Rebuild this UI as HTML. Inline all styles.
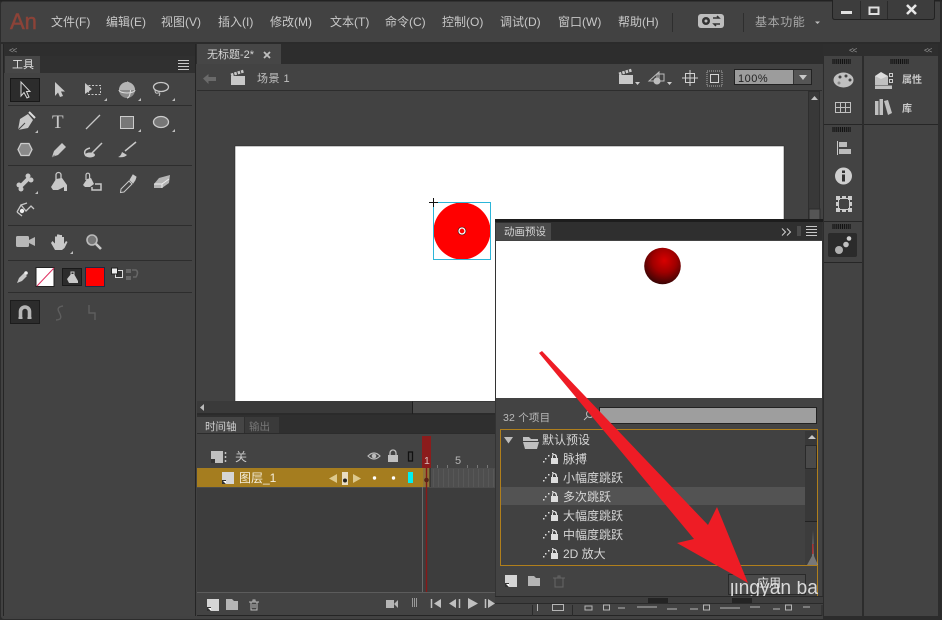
<!DOCTYPE html>
<html><head><meta charset="utf-8">
<style>
html,body{margin:0;padding:0;background:#424242;width:942px;height:620px;overflow:hidden}
svg{display:block}
text{font-family:"Liberation Sans","Noto Sans CJK SC",sans-serif;font-size:12px;fill:#c8c8c8}
</style></head><body>
<svg width="942" height="620" viewBox="0 0 942 620" xmlns="http://www.w3.org/2000/svg">
<defs>
<radialGradient id="ball" cx="55%" cy="35%" r="65%"><stop offset="0" stop-color="#d80000"/><stop offset=".5" stop-color="#a00000"/><stop offset="1" stop-color="#3a0505"/></radialGradient>
<clipPath id="wm"><rect x="730" y="581" width="88" height="15"/></clipPath>
<g id="tri"><path d="M0 3L3 0V3Z" fill="#bdbdbd"/></g>
<g id="preset"><g fill="#ddd"><rect x="0" y="9" width="1.500" height="1.500"/><rect x="2" y="6" width="1.500" height="1.500"/><rect x="5" y="3" width="1.500" height="1.500"/><rect x="9" y="1" width="1.500" height="1.500"/><rect x="12" y="3" width="1.500" height="1.500"/></g><rect x="8" y="6" width="7" height="6" fill="#ddd"/><path d="M9.500 6V4.500a2 2 0 0 1 4 0V6" fill="none" stroke="#ddd"/></g>
<g id="grip"><path d="M0 0v5M2 0v5M4 0v5M6 0v5M8 0v5M10 0v5M12 0v5M14 0v5M16 0v5M18 0v5" stroke="#111" stroke-width="1.100"/></g>
<g id="menu"><path d="M0 .5H11M0 3.500H11M0 6.500H11M0 9.500H11" stroke="#c8c8c8"/></g>
<g id="layer"><rect width="12" height="12" fill="#d5d5d5"/><path d="M0 8H4V12H0Z" fill="#333"/><path d="M1 9h3v3z" fill="#fff"/></g>
</defs>

<!-- window -->
<rect width="942" height="620" fill="#2c2c2c"/>
<rect x="1" y="1" width="940" height="618" rx="3" fill="#424242"/>
<rect x="0" y="0" width="942" height="1.500" fill="#222"/>
<rect x="0" y="42" width="942" height="2" fill="#2b2b2b"/>

<!-- title/menu -->
<text x="10" y="29" style="font-size:22px;fill:#8c4338;stroke:#8c4338;stroke-width:.5">An</text>
<g style="font-size:12px">
<text x="51" y="26">文件(F)</text><text x="106" y="26">编辑(E)</text><text x="161" y="26">视图(V)</text><text x="218" y="26">插入(I)</text><text x="270" y="26">修改(M)</text><text x="330" y="26">文本(T)</text><text x="385" y="26">命令(C)</text><text x="442" y="26">控制(O)</text><text x="500" y="26">调试(D)</text><text x="558" y="26">窗口(W)</text><text x="618" y="26">帮助(H)</text>
</g>
<path d="M672.500 13V32M743.500 13V32" stroke="#2e2e2e"/>
<rect x="698" y="14" width="26" height="14" rx="3" fill="#bdbdbd"/>
<circle cx="706" cy="21" r="4" fill="#333"/><circle cx="706" cy="21" r="1.500" fill="#bdbdbd"/>
<path d="M713 18h6l-2-2M720 24h-6l2 2" stroke="#333" stroke-width="1.500" fill="none"/>
<text x="755" y="26" style="font-size:12px;fill:#a8a8a8;letter-spacing:.6px">基本功能</text>
<path d="M815 21.500h5l-2.500 2.500z" fill="#bdbdbd"/>
<!-- window buttons -->
<path d="M832.500 0V17q0 2.500 2.500 2.500H932q2.500 0 2.500-2.500V0" fill="#3d3d3d" stroke="#222"/>
<path d="M860.500 1V19M887.500 1V19" stroke="#2a2a2a"/>
<rect x="841" y="11" width="11" height="3" fill="#e0e0e0"/>
<rect x="869.500" y="7.500" width="9" height="6.500" fill="none" stroke="#e0e0e0" stroke-width="2"/>
<path d="M907 5L916 14M916 5L907 14" stroke="#e8e8e8" stroke-width="2.600"/>

<!-- tools panel -->
<rect x="4" y="44" width="191" height="572" fill="#434343"/>
<rect x="4" y="44" width="191" height="12" fill="#2e2e2e"/>
<rect x="4" y="56" width="191" height="17" fill="#303030"/>
<rect x="5" y="56" width="35" height="17" fill="#464646"/>
<text x="12" y="68" style="font-size:11px;fill:#e0e0e0">工具</text>
<text x="9" y="53" style="font-size:8px;fill:#999;letter-spacing:-1px">&lt;&lt;</text>
<use href="#menu" x="178" y="60"/>
<path d="M195.500 44V616" stroke="#252525"/>
<path d="M3.500 44V616" stroke="#252525"/>
<g stroke="#2d2d2d"><path d="M8 105.500H192M8 165.500H192M8 225.500H192M8 260.500H192M8 292.500H192"/></g>

<!-- row 1 -->
<rect x="10.500" y="78.500" width="29" height="23" fill="#2c2c2c" stroke="#181818"/>
<path d="M21 82V96L24 92.500L27 98L29 97L26.500 91.500H30Z" fill="none" stroke="#d8d8d8"/>
<path d="M55 82V96L58 92.500L60 97L63 96L61 91.500H65Z" fill="#c8c8c8"/>
<path d="M85 83V94L92 89Z" fill="#c8c8c8"/><rect x="88.500" y="85.500" width="12" height="9" fill="none" stroke="#c8c8c8" stroke-dasharray="2 1.500"/>
<circle cx="127" cy="90" r="8" fill="#8a8a8a"/><path d="M119 90a8 3 0 0 0 16 0M127 82a3.500 8 0 0 1 0 16" stroke="#ddd" fill="none"/><path d="M119 90a8 8 0 0 1 16 0z" fill="#b5b5b5"/>
<ellipse cx="161" cy="87" rx="7.500" ry="4.500" fill="none" stroke="#c8c8c8" stroke-width="1.300"/><path d="M155 90q0 4 3 3q3-1 1 3" fill="none" stroke="#c8c8c8"/>
<use href="#tri" x="104" y="98"/><use href="#tri" x="138" y="98"/><use href="#tri" x="172" y="98"/>

<!-- row 2 -->
<path d="M18 130L20 119L28 114L33 120L28 128Z" fill="#c8c8c8"/><path d="M18 130L25 123" stroke="#444"/><path d="M29 112L35 118" stroke="#ddd" stroke-width="2"/>
<use href="#tri" x="35" y="130"/>
<text x="52" y="128" style="font-family:'Liberation Serif',serif;font-size:19px;fill:#c8c8c8">T</text>
<path d="M86 129L100 115" stroke="#c8c8c8" stroke-width="1.300"/>
<rect x="120.500" y="116.500" width="13" height="12" fill="#777" stroke="#ccc"/>
<use href="#tri" x="138" y="129"/>
<ellipse cx="161" cy="122" rx="7.500" ry="5.500" fill="#777" stroke="#ccc" stroke-width="1.300"/>
<use href="#tri" x="172" y="129"/>
<path d="M18 149.500L21 143.500H29L32 149.500L29 155.500H21Z" fill="#8a8a8a" stroke="#ccc" stroke-width="1.300"/>
<path d="M52 157L54 151L62 143L66 147L58 155Z" fill="#c8c8c8"/><path d="M52 157L55 155" stroke="#888"/>
<path d="M86 156q-4-6 4-8M92 153L102 143" stroke="#c8c8c8" stroke-width="1.500" fill="none"/><ellipse cx="90" cy="155" rx="5" ry="2.500" fill="#c8c8c8"/>
<path d="M125 151L136 142" stroke="#c8c8c8" stroke-width="1.500"/><path d="M118 157q3-1 4-5l5 3q-3 3-9 2z" fill="#c8c8c8"/>

<!-- row 3 -->
<path d="M20 187L29 178" stroke="#c8c8c8" stroke-width="4"/><circle cx="19" cy="185" r="2.500" fill="#c8c8c8"/><circle cx="21" cy="189" r="2.500" fill="#c8c8c8"/><circle cx="28" cy="176" r="2.500" fill="#c8c8c8"/><circle cx="31" cy="180" r="2.500" fill="#c8c8c8"/>
<use href="#tri" x="35" y="191"/>
<path d="M51 187L56 179L62 178L67 185V191H64V187L58 190H53Z" fill="#c8c8c8"/><path d="M56 180V175a2.500 2.500 0 0 1 5 0V179" fill="none" stroke="#c8c8c8" stroke-width="1.300"/>
<path d="M83 185L87 179L91 178L94 184L90 187H85Z" fill="#c8c8c8"/><path d="M86 180V175a1.800 1.800 0 0 1 3.600 0V179" fill="none" stroke="#c8c8c8" stroke-width="1.200"/><path d="M95 184H101V190H92V187" fill="none" stroke="#c8c8c8" stroke-width="1.500"/>
<path d="M121 189L129 181L132 184L124 192L120.500 192.500Z" fill="none" stroke="#c8c8c8"/><path d="M130 180L133 175L136 177L135 180L133 183Z" fill="#c8c8c8" stroke="#c8c8c8"/>
<path d="M154 184L159 178L170 175L169 183L162 188H154Z" fill="#b5b5b5"/><path d="M154 184H162L169 179M162 184V188" stroke="#eee" fill="none"/>
<path d="M17 212L21 205L26 211L31 206L34 209M21 205L27 203M17 212L22 216" fill="none" stroke="#c8c8c8" stroke-width="1.300"/><circle cx="22" cy="211" r="2.200" fill="#eee"/>

<!-- row 4 -->
<rect x="16" y="236" width="13" height="11" rx="1.500" fill="#b8b8b8"/><path d="M29 240L35 237V246L29 243Z" fill="#b8b8b8"/>
<path d="M55 250L51 243L52.500 241L55 243.500V236.500H57V242V234.500H59.500V242V235H62V242V237H64V244L66 241L67.500 242L64.500 248L62 250Z" fill="#c8c8c8"/>
<use href="#tri" x="70" y="251"/>
<circle cx="92" cy="240" r="5" fill="#777" stroke="#bbb" stroke-width="1.600"/><path d="M96 244L101 249" stroke="#c8c8c8" stroke-width="2.600"/>

<!-- colors -->
<path d="M17 283L19 278L24 273L27 276L22 281Z" fill="#c8c8c8"/><circle cx="26" cy="273" r="1.800" fill="#eee"/>
<rect x="36" y="267.500" width="18" height="19" fill="#fff" stroke="#222"/><path d="M37 286L54 268" stroke="#e03060"/>
<rect x="62.500" y="268.500" width="19" height="17" fill="#2c2c2c" stroke="#1a1a1a"/>
<path d="M67 279L71 274H74L78 281V283H69Z" fill="#c8c8c8"/><path d="M71 275V272h3V275" stroke="#c8c8c8" fill="none"/>
<rect x="85.500" y="267.500" width="19" height="19" fill="#f00" stroke="#1d2a44"/>
<rect x="115.500" y="270.500" width="7" height="7" fill="#333" stroke="#ddd"/><rect x="111.500" y="268" width="6" height="6" fill="#eee" stroke="#222"/>
<g fill="#666"><rect x="126" y="269" width="5" height="4"/><rect x="126" y="276" width="5" height="4"/></g><path d="M132 270H136Q139 272 136 277H133" fill="none" stroke="#666" stroke-width="1.500"/>

<!-- snap -->
<rect x="10.500" y="300.500" width="29" height="23" fill="#2c2c2c" stroke="#1c1c1c"/>
<path d="M20.500 317V311.500a4.500 4.500 0 0 1 9 0V317" fill="none" stroke="#b5b5b5" stroke-width="3.600"/><path d="M18.500 318h4M27.500 318h4" stroke="#e5e5e5" stroke-width="1.500"/>
<path d="M63 306q-7 1-4 6t1 7q-2 1-4 1" fill="none" stroke="#5e5e5e" stroke-width="1.400"/>
<path d="M89 305V313H95V320" fill="none" stroke="#5e5e5e" stroke-width="1.400"/>

<!-- document -->
<rect x="196" y="44" width="627" height="20" fill="#2d2d2d"/>
<rect x="197" y="44" width="84" height="20" fill="#464646"/>
<text x="207" y="58" style="font-size:11px;fill:#d5d5d5">无标题-2*</text>
<path d="M264 52L270 58M270 52L264 58" stroke="#c0c0c0" stroke-width="1.800"/>
<rect x="197" y="64" width="625" height="26" fill="#434343"/>
<path d="M197 90.500H822" stroke="#2d2d2d"/>
<path d="M203 78.500L208.500 74V77H216V81H208.500V84Z" fill="#6a6a6a"/>
<rect x="231" y="76" width="14" height="9" fill="#c8c8c8"/><path d="M231 75L244 71" stroke="#c8c8c8" stroke-width="3" stroke-dasharray="2.500 1"/>
<text x="257" y="82" style="font-size:11px;fill:#c0c0c0;letter-spacing:.5px">场景 1</text>
<!-- edit bar right -->
<rect x="619" y="75" width="14" height="9" fill="#c8c8c8"/><path d="M619 74L632 70" stroke="#c8c8c8" stroke-width="3" stroke-dasharray="2.500 1"/>
<path d="M635 82h5l-2.500 3z" fill="#ccc"/>
<path d="M649 81L659 72V81Z" fill="none" stroke="#bbb"/><circle cx="657" cy="81" r="3.500" fill="#bdbdbd"/><rect x="657" y="74" width="7" height="7" fill="none" stroke="#bbb"/>
<path d="M667 82h5l-2.500 3z" fill="#ccc"/>
<rect x="685.500" y="73.500" width="9" height="9" fill="none" stroke="#d0d0d0"/><path d="M690 70V86M682 78H698" stroke="#d0d0d0"/>
<rect x="707" y="71" width="15" height="15" fill="none" stroke="#777" stroke-dasharray="1 1" stroke-width="2"/><rect x="710.500" y="74.500" width="8" height="8" fill="none" stroke="#d5d5d5"/>
<rect x="734.500" y="69.500" width="77" height="15" fill="#333" stroke="#222"/>
<rect x="735" y="70" width="58" height="14" fill="#9c9c9c"/>
<rect x="794" y="70" width="17" height="14" fill="#555"/>
<text x="738" y="82" style="font-size:11px;fill:#222;letter-spacing:.5px">100%</text>
<path d="M799 75h8l-4 5z" fill="#c8c8c8"/>

<!-- stage -->
<rect x="197" y="91" width="625" height="310" fill="#424242"/>
<rect x="235" y="146" width="549" height="256" fill="#fff" stroke="#222" stroke-width=".5"/>
<!-- v scrollbar -->
<rect x="808" y="91" width="12" height="311" fill="#2e2e2e"/>
<rect x="809" y="92" width="10" height="308" fill="#383838"/>
<path d="M811 100H818L814.500 96Z" fill="#c0c0c0"/>
<rect x="809" y="209" width="11" height="12" fill="#555" stroke="#2c2c2c"/>
<!-- h scrollbar -->
<rect x="197" y="401" width="625" height="13" fill="#3a3a3a"/>
<rect x="197" y="413" width="625" height="2" fill="#2b2b2b"/>
<path d="M412.500 401.500V414" stroke="#1f1f1f"/>
<rect x="413" y="402" width="85" height="11" fill="#4a4a4a"/>
<path d="M204 404V411L200 407.500Z" fill="#bbb"/>

<!-- shape -->
<circle cx="462" cy="231" r="28.500" fill="#f00"/>
<rect x="433.500" y="202.500" width="57" height="57" fill="none" stroke="#2cb5d8"/>
<path d="M433.500 198V207M429 202.500H438" stroke="#111"/>
<circle cx="462" cy="231" r="3" fill="#f00" stroke="#fff" stroke-width="1.300"/><circle cx="462" cy="231" r="4" fill="none" stroke="#222" stroke-width=".6"/>

<!-- timeline -->
<rect x="197" y="415" width="300" height="201" fill="#3d3d3d"/>
<rect x="197" y="415" width="300" height="18" fill="#2f2f2f"/>
<rect x="197" y="417" width="47" height="17" fill="#454545"/>
<rect x="245" y="417" width="34" height="17" fill="#3a3a3a"/>
<text x="205" y="430" style="font-size:10.500px;fill:#d0d0d0">时间轴</text>
<text x="249" y="430" style="font-size:10.500px;fill:#777">输出</text>
<rect x="197" y="434" width="300" height="34" fill="#434343"/>
<path d="M197 433.500H497" stroke="#2c2c2c"/>
<rect x="211" y="451" width="12" height="12" fill="#c0c0c0"/><path d="M211 459H215V463H211Z" fill="#333"/>
<path d="M225.500 452v2M225.500 456v2M225.500 460v2" stroke="#c0c0c0" stroke-width="1.500"/>
<text x="235" y="461" style="font-size:12px;fill:#c8c8c8">关</text>
<path d="M368 456q6-6 12 0q-6 6-12 0z" fill="none" stroke="#bbb" stroke-width="1.200"/><circle cx="374" cy="456" r="2.300" fill="#bbb"/>
<rect x="388" y="455" width="10" height="7" fill="#c0c0c0"/><path d="M390 455V453a3 3 0 0 1 6 0V455" fill="none" stroke="#c0c0c0" stroke-width="1.300"/>
<rect x="408.500" y="452" width="4" height="9" fill="none" stroke="#111" stroke-width="1.300"/>
<!-- layer row -->
<rect x="197" y="468" width="226" height="19" fill="#a57d1f"/>
<use href="#layer" x="222" y="472"/>
<text x="239" y="482" style="font-size:12px;fill:#f5efdc">图层_1</text>
<path d="M329 478.500L337 474V483Z" fill="#ddc98e"/><path d="M361 478.500L353 474V483Z" fill="#ddc98e"/>
<rect x="342" y="472" width="6" height="13" fill="#e8dcc0"/><circle cx="345" cy="480.500" r="2" fill="#222"/>
<circle cx="374.500" cy="478" r="1.700" fill="#fff"/><circle cx="393.500" cy="478" r="1.700" fill="#fff"/>
<rect x="408" y="472" width="5" height="11" fill="#00f0f0"/>
<!-- frames -->
<rect x="423" y="468" width="74" height="20" fill="#4e4e4e"/>
<g stroke="#575757"><path d="M428.500 469V487M433.500 469V487M438.500 469V487M443.500 469V487M448.500 469V487M453.500 469V487M458.500 469V487M463.500 469V487M468.500 469V487M473.500 469V487M478.500 469V487M483.500 469V487M488.500 469V487M493.500 469V487"/></g>
<rect x="423" y="468" width="7" height="20" fill="#8d7539"/>
<path d="M430 468V487" stroke="#222"/>
<path d="M197 487.500H497" stroke="#4c4c4c"/>
<g stroke="#777"><path d="M437.500 465V468M447.500 465V468M467.500 465V468M477.500 465V468M487.500 465V468"/></g>
<text x="455" y="464" style="font-size:11px;fill:#b5b5b5">5</text>
<path d="M422.500 487V615" stroke="#6a6a6a"/>
<rect x="422" y="436" width="9" height="32" fill="#8b1c1c"/>
<text x="424" y="464" style="font-size:10.500px;fill:#d8c0c0">1</text>
<path d="M426.500 468V592" stroke="#861818" stroke-width="1.400"/>
<circle cx="426.500" cy="480" r="2.300" fill="#5a2318"/>
<!-- timeline bottom -->
<rect x="197" y="592" width="625" height="24" fill="#434343"/>
<path d="M197 592.500H497" stroke="#5c5c5c"/>
<path d="M197 615.500H822" stroke="#252525"/>
<use href="#layer" x="207" y="599"/>
<path d="M226 599H232L234 601H238V610H226Z" fill="#b5b5b5"/>
<path d="M249 602H259M251 602V610H257V602M253 602V600H255V602M253 604V608M255 604V608" stroke="#bbb" fill="none"/>
<rect x="386" y="600" width="8" height="8" fill="#b5b5b5"/><path d="M394 604L398 600V608Z" fill="#b5b5b5"/>
<path d="M412.500 598V607M414.500 598V607M416.500 598V607" stroke="#999"/>
<path d="M431.500 599V608" stroke="#c0c0c0" stroke-width="1.500"/><path d="M441 599V608L434 603.500Z" fill="#c0c0c0"/>
<path d="M456 599V608L449 603.500Z" fill="#c0c0c0"/><path d="M459.500 599V608" stroke="#c0c0c0" stroke-width="1.500"/>
<path d="M468 598V609L478 603.500Z" fill="#c0c0c0"/>
<path d="M485.500 599V608" stroke="#c0c0c0" stroke-width="1.500"/><path d="M488 599V608L495 603.500Z" fill="#c0c0c0"/>
<!-- residual toolbar below preset panel -->
<g stroke="#b5b5b5" fill="none"><path d="M537.500 604V611M552.500 604.500H563.500V610.500H552.500Z"/><path d="M585 606H592V610H585ZM603.500 605H609.500V610H603.500ZM618 608H625M637 607H657M667 609H677M690 609H698M703.500 605H709.500V610H703.500ZM720 608H740M750 607H760M773 609H780M785.500 605H791.500V610H785.500ZM803 607H810"/></g>
<path d="M532.500 605V616M572.500 605V616M822 605V616" stroke="#2a2a2a"/>

<!-- right panels -->
<rect x="823" y="44" width="119" height="576" fill="#2c2c2c"/>
<rect x="824" y="56" width="38" height="560" fill="#434343"/>
<rect x="864" y="56" width="74" height="560" fill="#434343"/>
<rect x="823" y="44" width="115" height="12" fill="#2e2e2e"/>
<text x="849" y="53" style="font-size:8px;fill:#999;letter-spacing:-1px">&lt;&lt;</text>
<text x="924" y="53" style="font-size:8px;fill:#999;letter-spacing:-1px">&lt;&lt;</text>
<use href="#grip" transform="translate(833,59) scale(.95,1)"/>
<use href="#grip" transform="translate(891,59) scale(.95,1)"/>
<ellipse cx="843.500" cy="80" rx="10" ry="7.500" fill="#c0c0c0"/><circle cx="840" cy="77" r="1.500" fill="#444"/><circle cx="846" cy="76" r="1.500" fill="#444"/><circle cx="850" cy="80" r="1.500" fill="#444"/><circle cx="839" cy="83" r="1.500" fill="#888"/>
<rect x="835.500" y="102.500" width="15" height="10" fill="none" stroke="#c0c0c0"/><path d="M835 107.500H851M840.500 102V113M845.500 102V113" stroke="#c0c0c0"/>
<path d="M824 124.500H862" stroke="#262626"/>
<use href="#grip" transform="translate(833,127) scale(.95,1)"/>
<path d="M837.500 141V155" stroke="#c8c8c8"/><rect x="839" y="142" width="8" height="5" fill="#bbb"/><rect x="839" y="149" width="12" height="5" fill="#bbb"/>
<circle cx="843.500" cy="176" r="8.500" fill="#cfcfcf"/><rect x="842" y="174.500" width="3" height="7" fill="#333"/><rect x="842" y="170.500" width="3" height="2.500" fill="#333"/>
<rect x="838.500" y="198.500" width="11" height="11" fill="none" stroke="#ccc"/><g fill="#ccc"><rect x="836" y="196" width="4" height="4"/><rect x="848" y="196" width="4" height="4"/><rect x="836" y="208" width="4" height="4"/><rect x="848" y="208" width="4" height="4"/><rect x="842" y="196" width="4" height="3"/><rect x="842" y="209" width="4" height="3"/><rect x="836" y="202" width="3" height="4"/><rect x="849" y="202" width="3" height="4"/></g>
<path d="M824 221.500H862" stroke="#262626"/>
<use href="#grip" transform="translate(833,224) scale(.95,1)"/>
<rect x="828" y="233" width="29" height="24" rx="2" fill="#2b2b2b"/>
<circle cx="839" cy="250" r="4" fill="#b0b0b0"/><circle cx="846" cy="244.500" r="2.800" fill="#c0c0c0"/><circle cx="849" cy="238.500" r="2.300" fill="#cfcfcf"/>
<path d="M824 262.500H862" stroke="#262626"/>
<rect x="875" y="76" width="13" height="9" fill="#c0c0c0"/><path d="M875 76L881 72L888 76L881 79Z" fill="#ddd"/><rect x="889.500" y="73.500" width="3" height="3" fill="none" stroke="#ccc"/><rect x="889.500" y="79.500" width="3" height="3" fill="none" stroke="#ccc"/>
<rect x="875" y="85.500" width="17" height="3.500" fill="#c0c0c0"/>
<text x="902" y="83" style="font-size:10px;font-weight:bold;fill:#c8c8c8">属性</text>
<rect x="875" y="101" width="3.500" height="14" fill="#c0c0c0"/><rect x="879.500" y="99" width="3.500" height="16" fill="#c0c0c0"/><path d="M884 101L888 100L892 113L888 115Z" fill="#c0c0c0"/>
<text x="902" y="112" style="font-size:10px;font-weight:bold;fill:#c8c8c8">库</text>
<path d="M864 124.500H938" stroke="#262626"/>
<path d="M940.500 0V620" stroke="#2a2a2a"/>

<!-- animation presets panel -->
<rect x="495" y="219" width="328" height="385" fill="#434343"/>
<rect x="495" y="219" width="328" height="3" fill="#1d1d1d"/>
<rect x="495" y="222" width="328" height="18" fill="#2f2f2f"/>
<rect x="496" y="223" width="55" height="17" fill="#4a4a4a"/>
<text x="504" y="235" style="font-size:10.500px;fill:#d5d5d5">动画预设</text>
<path d="M782 228.500L785.500 232L782 235.500M787 228.500L790.500 232L787 235.500" fill="none" stroke="#d0d0d0"/>
<path d="M798 226V236M800 226V236" stroke="#666"/>
<use href="#menu" x="806" y="226"/>
<rect x="496" y="241" width="326" height="157" fill="#fff"/>
<circle cx="662.500" cy="266" r="18.300" fill="url(#ball)"/>
<path d="M495.500 222V604M822.500 222V604" stroke="#333"/>
<text x="503" y="421" style="font-size:10.500px;fill:#bbb;letter-spacing:.2px">32 个项目</text>
<circle cx="590" cy="414" r="3.500" fill="none" stroke="#bbb"/><path d="M587 417L584 420" stroke="#bbb"/>
<rect x="599.500" y="407.500" width="217" height="16" fill="#9e9e9e" stroke="#222"/>
<!-- list -->
<rect x="500.500" y="429.500" width="317" height="136" fill="#414141" stroke="#b07f1c"/>
<rect x="501" y="487" width="304" height="18" fill="#535353"/>
<path d="M504 437H513L508.500 443.500Z" fill="#bdbdbd"/>
<path d="M523 441V437H529L531 439H538V441Z M523 442H539L537 449H525Z" fill="#c0c0c0"/>
<text x="542" y="444" style="font-size:12px;fill:#d5d5d5">默认预设</text>
<text x="563" y="463" style="font-size:12px;fill:#d5d5d5">脉搏</text>
<text x="563" y="482" style="font-size:12px;fill:#d5d5d5">小幅度跳跃</text>
<text x="563" y="501" style="font-size:12px;fill:#d5d5d5">多次跳跃</text>
<text x="563" y="520" style="font-size:12px;fill:#d5d5d5">大幅度跳跃</text>
<text x="563" y="539" style="font-size:12px;fill:#d5d5d5">中幅度跳跃</text>
<text x="563" y="558" style="font-size:12px;fill:#d5d5d5">2D 放大</text>
<use href="#preset" x="543" y="452"/><use href="#preset" x="543" y="471"/><use href="#preset" x="543" y="490"/><use href="#preset" x="543" y="509"/><use href="#preset" x="543" y="528"/><use href="#preset" x="543" y="547"/>
<!-- list scrollbar -->
<rect x="805" y="431" width="12" height="134" fill="#383838"/>
<path d="M808 439H816L812 435Z" fill="#c8c8c8"/>
<rect x="805.500" y="445.500" width="11" height="23" fill="#4a4a4a" stroke="#2a2a2a"/>
<path d="M805 521.500H817" stroke="#222"/>
<rect x="805" y="522" width="12" height="43" fill="#3c3c3c"/>
<path d="M807 565L812 556L813 530L814 556L818 565Z" fill="#aaa" opacity=".55"/>
<rect x="812" y="544" width="1.500" height="10" fill="#a33"/>
<!-- bottom of presets -->
<path d="M817.500 565V596" stroke="#b07f1c" fill="none"/>
<use href="#layer" x="505" y="575"/>
<path d="M528 576H534L536 578H540V586H528Z" fill="#b5b5b5"/>
<path d="M553 578H565M555 578V587H563V578M558 578V576H560V578" stroke="#666" fill="none"/>
<rect x="728.500" y="574.500" width="77" height="20" fill="#4a4a4a" stroke="#2a2a2a"/>
<g clip-path="url(#wm)"><text x="730" y="594" textLength="88" lengthAdjust="spacingAndGlyphs" style="font-size:20px;fill:#d8d8d8">jingyan ba</text></g>
<text x="757" y="587" style="font-size:12px;fill:#e8e8e8">应用</text>
<rect x="495" y="596" width="328" height="8" fill="#3e3e3e"/>
<path d="M495 596.500H823M495 603.500H823" stroke="#2a2a2a"/>
<use href="#grip" transform="translate(649,598)"/>
<use href="#grip" transform="translate(733,598)"/>

<!-- red arrow -->
<polygon points="539,353 542,351 708,525 717,507 748,583 677,543 694,539" fill="#ee1c25"/>
</svg>
</body></html>
